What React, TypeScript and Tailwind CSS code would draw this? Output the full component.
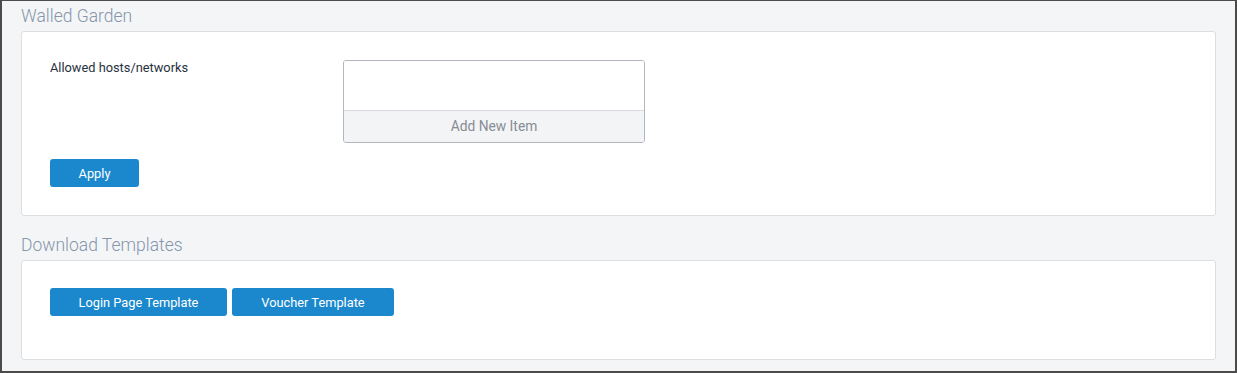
import React from "react";

export default function App() {
  const font = { fontFamily: "Roboto, 'Liberation Sans', sans-serif" };
  return (
    <div
      className="w-[1237px] h-[373px] bg-[#f4f5f7] border-[#4b4b4b] border-t border-l-2 border-r-2 border-b-2 px-[19px] overflow-hidden"
      style={font}
    >
      <div className="h-[30px] pt-[4px] text-[17.5px] leading-[22px] font-light text-[#8596aa]">Walled Garden</div>
      <div className="h-[185px] bg-white border border-[#dcdee1] rounded-[3px] pt-[28px] pl-[28px]">
        <div className="flex">
          <div className="w-[293px] pt-[1px] text-[12.8px] leading-[14px] text-[#28313d]">Allowed hosts/networks</div>
          <div className="w-[302px] h-[83px] border border-[#b2b7bd] rounded-[3px] flex flex-col overflow-hidden">
            <div className="h-[50px] bg-white border-b border-[#d8dbdf]"></div>
            <div className="flex-1 bg-[#f3f4f6] flex items-center justify-center text-[13.8px] text-[#878d94]">Add New Item</div>
          </div>
        </div>
        <button className="mt-[16px] w-[89px] h-[28px] pt-[2px] bg-[#1b88cd] rounded-[3px] text-white text-[12.8px]">Apply</button>
      </div>
      <div className="h-[44px] pt-[18px] text-[17.5px] leading-[22px] font-light text-[#8596aa]">Download Templates</div>
      <div className="h-[100px] bg-white border border-[#dcdee1] rounded-[3px] pt-[27px] pl-[28px]">
        <div className="flex gap-[5px]">
          <button className="w-[177px] h-[28px] pt-[1px] bg-[#1b88cd] rounded-[3px] text-white text-[12.8px]">Login Page Template</button>
          <button className="w-[162px] h-[28px] pt-[1px] bg-[#1b88cd] rounded-[3px] text-white text-[12.8px]">Voucher Template</button>
        </div>
      </div>
    </div>
  );
}
